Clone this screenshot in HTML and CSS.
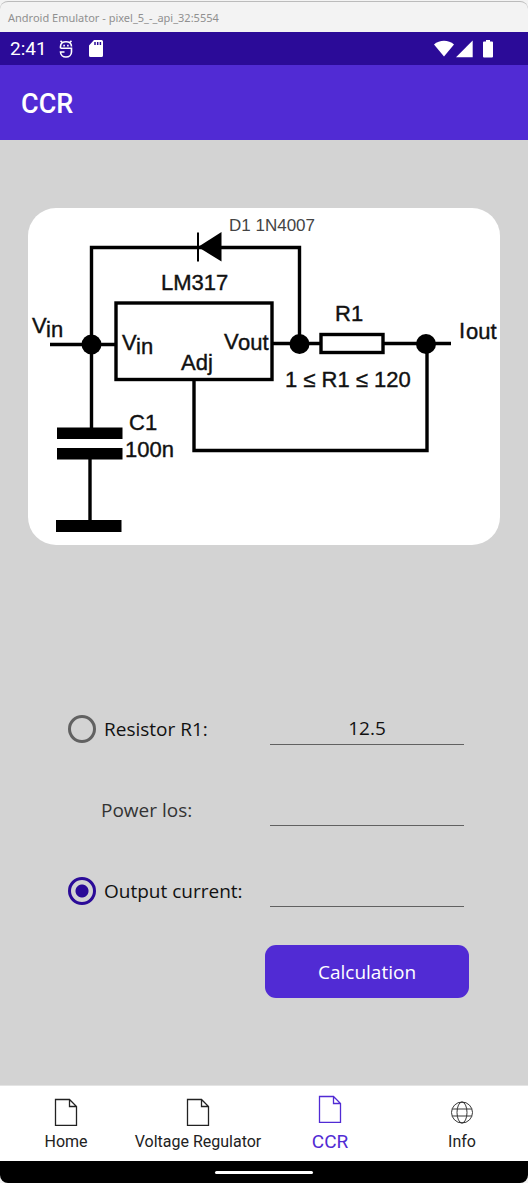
FILE: index.html
```html
<!DOCTYPE html>
<html lang="en">
<head>
<meta charset="utf-8">
<meta name="viewport" content="width=device-width, initial-scale=1">
<title>CCR</title>
<link rel="stylesheet" href="styles.css">
</head>
<body>
<div class="window">
  <div class="titlebar">Android Emulator - pixel_5_-_api_32:5554</div>
  <div class="statusbar">
    <span class="clock">2:41</span>
    <svg class="status-debug" width="14" height="18" viewBox="0 0 14 18" fill="none" stroke="#fff" stroke-width="1.600" aria-hidden="true">
      <path d="M1.500 .8l2 1.800M12.500 .8l-2 1.800M1.500 8.300V6.500C1.500 3.500 4 1.700 7 1.700s5.500 1.800 5.500 4.800"/>
      <path d="M4.300 5.600h1.600M8.100 5.600h1.600"/>
      <path d="M1.500 8.300h11v3.700c0 3-2.500 5-5.500 5s-5.500-2-5.500-5h4"/>
    </svg>
    <svg class="status-card" width="14" height="17" viewBox="0 0 14 17" aria-hidden="true">
      <path fill="#fff" d="M5 0h7.500A1.500 1.500 0 0 1 14 1.500v14a1.500 1.500 0 0 1-1.500 1.500h-11A1.500 1.500 0 0 1 0 15.500V5.500z"/>
      <path stroke="#2b0b98" stroke-width="1.500" d="M6 2v3M8.700 2v3M11.400 2v3"/>
    </svg>
    <svg class="status-signals" width="60" height="18" viewBox="0 0 60 18" fill="#fff" aria-hidden="true">
      <path d="M0 4.500C5.500-.5 14.500-.5 20 4.500L10 16.500z"/>
      <path d="M38.700.5v16.700H22z"/>
      <path d="M52 0h4v1.500h2A1 1 0 0 1 59 2.500v14a1 1 0 0 1-1 1h-8a1 1 0 0 1-1-1v-14a1 1 0 0 1 1-1h2z"/>
    </svg>
  </div>
  <header class="appbar"><h1 class="appbar-title">CCR</h1></header>

  <main class="content">
    <svg class="schematic" viewBox="28 208 472 337" role="img" aria-label="LM317 constant current regulator schematic">
      <g fill="none" stroke="#000" stroke-width="3.400">
        <path d="M91.500 428V247.500H299.500V344"/>
        <path d="M50 344.500H116M272 343.500H321M383 343.500H451"/>
        <rect x="116" y="303" width="156" height="76.500"/>
        <rect x="321" y="334.500" width="62" height="18"/>
        <path d="M194 380V450.500H427V344"/>
        <path d="M90 458V521"/>
        <path stroke-width="2" d="M198 232.500V261.500"/>
      </g>
      <path d="M198 247L221.500 232V261.500Z"/>
      <circle cx="91.500" cy="344.500" r="10"/>
      <circle cx="299.500" cy="344" r="10"/>
      <circle cx="426" cy="344" r="10"/>
      <path d="M57 427.500h65.500v11.500H57zM57 448h65.500v11.500H57zM56 520h65.500v12H56z"/>
      <g class="schematic-text">
        <text class="small" x="229" y="231">D1 1N4007</text>
        <text x="161" y="290">LM317</text>
        <text x="335" y="321">R1</text>
        <text x="32" y="333">V<tspan x="46" y="337">in</tspan></text>
        <text x="122" y="350">V<tspan x="136" y="354">in</tspan></text>
        <text x="224" y="349">V<tspan x="238" y="350">out</tspan></text>
        <text x="181" y="370">Adj</text>
        <text x="459" y="338">I<tspan x="466" y="339">out</tspan></text>
        <text x="285" y="387">1 ≤ R1 ≤ 120</text>
        <text x="129" y="430">C1</text>
        <text x="125" y="457">100n</text>
      </g>
    </svg>

    <form class="form">
      <div class="row">
        <label class="choice"><input class="radio" type="radio" name="solve" value="r1"><span>Resistor R1:</span></label>
        <input class="entry" type="text" value="12.5" aria-label="Resistor R1">
      </div>
      <div class="row">
        <label class="caption" for="power">Power los:</label>
        <input class="entry" id="power" type="text">
      </div>
      <div class="row">
        <label class="choice"><input class="radio" type="radio" name="solve" value="iout" checked><span>Output current:</span></label>
        <input class="entry" type="text" aria-label="Output current">
      </div>
      <div class="row actions"><button class="button" type="button">Calculation</button></div>
    </form>
  </main>

  <nav class="tabs">
    <a class="tab" href="#home">
      <svg class="tab-icon" viewBox="0 0 28 28" aria-hidden="true"><path d="M3.500 1.500H17.500L24.500 8.500V27.500H3.500zM17.500 1.500V8.500H24.500"/></svg>
      <span>Home</span>
    </a>
    <a class="tab" href="#voltage">
      <svg class="tab-icon" viewBox="0 0 28 28" aria-hidden="true"><path d="M3.500 1.500H17.500L24.500 8.500V27.500H3.500zM17.500 1.500V8.500H24.500"/></svg>
      <span>Voltage Regulator</span>
    </a>
    <a class="tab active" href="#ccr" aria-current="page">
      <svg class="tab-icon" viewBox="0 0 28 28" aria-hidden="true"><path d="M3.500 1.500H17.500L24.500 8.500V27.500H3.500zM17.500 1.500V8.500H24.500"/></svg>
      <span>CCR</span>
    </a>
    <a class="tab" href="#info">
      <svg class="tab-icon thin" viewBox="0 0 28 28" aria-hidden="true"><circle cx="14" cy="14.500" r="10.500"/><ellipse cx="14" cy="14.500" rx="5" ry="10.500"/><path d="M4.200 11H23.800M4.200 18H23.800"/></svg>
      <span>Info</span>
    </a>
  </nav>
  <div class="gesture"><span class="gesture-pill"></span></div>
</div>
</body>
</html>
```
FILE: styles.css
```css
* { box-sizing: border-box; }
body { margin: 0; background: #f3f3f3; }
.window {
  display: flex;
  flex-direction: column;
  min-height: 100vh;
  font-family: "Open Sans", sans-serif;
}
.titlebar {
  height: 32px;
  padding-left: 8px;
  border-top: 1px solid #bbb;
  margin-top: 1px;
  margin-bottom: -1px;
  border-radius: 8px 8px 0 0;
  background: #f3f3f3;
  color: #909090;
  font-family: "Noto Sans", sans-serif;
  font-size: 11px;
  line-height: 31px;
}
.statusbar {
  display: flex;
  align-items: center;
  height: 33px;
  padding: 0 34px 0 10px;
  background: #2b0b98;
  color: #fff;
  font-family: Roboto, sans-serif;
  font-size: 19px;
}
.status-debug { margin-left: 12px; }
.status-card { margin-left: 16px; }
.status-signals { margin-left: auto; }
.appbar {
  display: flex;
  align-items: center;
  height: 75px;
  padding: 2px 21px 0;
  background: #512bd4;
}
.appbar-title {
  margin: 0;
  color: #fff;
  font: 500 27px Roboto, sans-serif;
}
.content {
  display: flex;
  flex: 1;
  flex-direction: column;
  padding: 68px 28px 0;
  background: #d3d3d3;
}
.schematic {
  display: block;
  width: 100%;
  border-radius: 28px;
  background: #fff;
}
.schematic-text {
  font-family: "Liberation Sans", Arial, sans-serif;
  font-size: 22px;
  fill: #111;
  stroke: #111;
  stroke-width: 0.4px;
}
.schematic-text .small { font-size: 17px; fill: #444; stroke: none; }
.form {
  margin: 143px 31px 0 40px;
  font-size: 19px;
}
.row {
  display: grid;
  grid-template-columns: 197fr 204fr;
  align-items: center;
  height: 81px;
}
.choice { display: flex; align-items: center; gap: 8px; color: #111; }
.radio {
  appearance: none;
  flex: none;
  width: 28px;
  height: 28px;
  margin: 0;
  border: 3px solid #616161;
  border-radius: 50%;
}
.radio:checked {
  border-color: #2b0b98;
  background: radial-gradient(circle, #2b0b98 6px, transparent 7px);
}
.caption { padding-left: 33px; color: #333; }
.entry {
  min-width: 0;
  height: 32px;
  margin: 0 5px;
  padding: 0;
  border: 0;
  border-bottom: 1px solid #616161;
  border-radius: 0;
  outline: 0;
  background: transparent;
  color: #111;
  font: inherit;
  text-align: center;
}
.button {
  grid-column: 2;
  height: 53px;
  padding: 0;
  border: 0;
  border-radius: 11px;
  background: #512bd4;
  color: #fff;
  font: inherit;
}
.tabs {
  display: grid;
  grid-template-columns: repeat(4, 1fr);
  height: 76px;
  border-top: 1px solid #e4e4e4;
  background: #fff;
}
.tab {
  display: flex;
  flex-direction: column;
  align-items: center;
  padding-top: 12px;
  gap: 6px;
  color: #222;
  font-family: Roboto, sans-serif;
  font-size: 16px;
  line-height: 20px;
  text-decoration: none;
  white-space: nowrap;
}
.tab-icon {
  width: 28px;
  height: 28px;
  fill: none;
  stroke: currentColor;
  stroke-width: 1.3px;
}
.tab-icon.thin { stroke-width: 0.9px; }
.tab.active { padding-top: 9px; gap: 9px; color: #512bd4; font-size: 19px; }
.gesture {
  display: flex;
  align-items: center;
  justify-content: center;
  height: 22px;
  border-radius: 0 0 8px 8px;
  background: #000;
}
.gesture-pill { width: 98px; height: 3px; border-radius: 2px; background: #fff; }
```
